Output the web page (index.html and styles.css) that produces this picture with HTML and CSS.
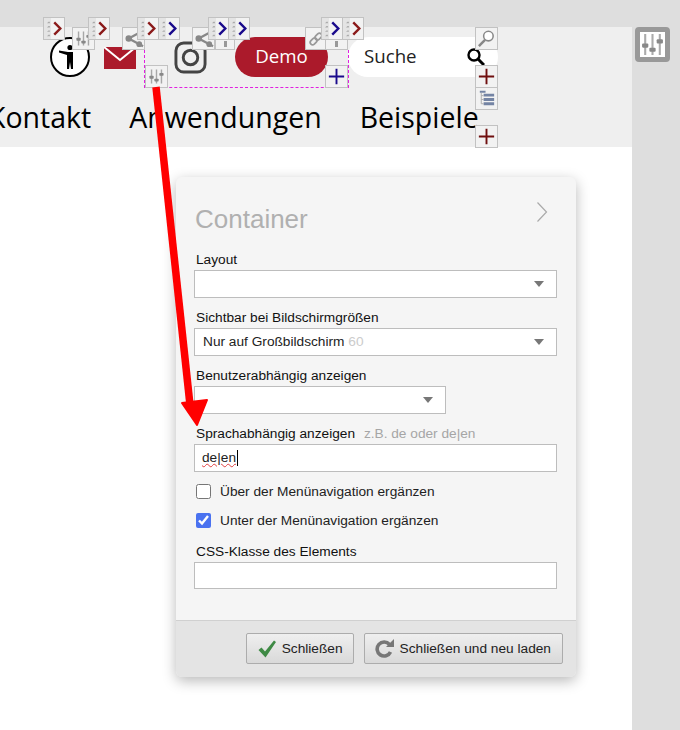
FILE: index.html
```html
<!DOCTYPE html>
<html lang="de">
<head>
<meta charset="utf-8">
<title>Container</title>
<link rel="stylesheet" href="styles.css">
</head>
<body>
<svg class="defs" width="0" height="0" aria-hidden="true">
  <symbol id="sliders" viewBox="0 0 24 24">
    <g fill="none" stroke="currentColor" stroke-width="2" stroke-opacity=".7">
      <path d="M5 2v20M12 2v20M19 2v20"/>
    </g>
    <g fill="currentColor">
      <rect x="2" y="11" width="6" height="4" rx="1"/>
      <rect x="9" y="15" width="6" height="4" rx="1"/>
      <rect x="16" y="7" width="6" height="4" rx="1"/>
    </g>
  </symbol>
  <symbol id="share" viewBox="0 0 22 22">
    <path d="M21 3 6 11l15 8" fill="none" stroke="currentColor" stroke-width="2.400"/>
    <circle cx="6" cy="11" r="3.400" fill="currentColor"/>
    <circle cx="17" cy="17" r="3" fill="currentColor"/>
  </symbol>
  <symbol id="plus" viewBox="0 0 22 22">
    <path d="M3 11h16M11 3v16" fill="none" stroke="currentColor" stroke-width="2"/>
  </symbol>
  <symbol id="grip" viewBox="0 0 7 22">
    <g fill="#aaa">
      <path d="M4.500 4h1.500v1.500H3zM4.500 8.500h1.500V10H3zM4.500 13h1.500v1.500H3zM4.500 17.500h1.500V19H3z"/>
    </g>
  </symbol>
  <symbol id="chev" viewBox="0 0 14 22">
    <path d="M3.500 4.500l6.500 6.500-6.500 6.500" fill="none" stroke="currentColor" stroke-width="2.600"/>
  </symbol>
</svg>

<div class="page">
  <div class="main">
    <header class="site-head">
      <div class="top-row">
        <svg class="ic-access" viewBox="0 0 40 40" aria-hidden="true">
          <circle cx="20" cy="20" r="19" fill="#fff" stroke="#000" stroke-width="2"/>
          <circle cx="20" cy="10.500" r="2.600" fill="#000"/>
          <path d="M9 13.500l9 1.500h5v9l0 8h-2l-1-7-1 7h-2v-14l-8-2.500z" fill="#000"/>
        </svg>
        <svg class="ic-mail" viewBox="0 0 32 22" aria-hidden="true">
          <rect width="32" height="22" fill="#ab1a2b"/>
          <path d="M0 0l16 13L32 0" fill="none" stroke="#fff" stroke-width="2"/>
        </svg>
        <svg class="ic-insta" viewBox="0 0 34 34" aria-hidden="true">
          <rect x="2" y="2" width="30" height="30" rx="8" fill="none" stroke="#444" stroke-width="3"/>
          <circle cx="17" cy="17" r="7.500" fill="none" stroke="#444" stroke-width="3"/>
        </svg>
        <a class="demo">Demo</a>
        <div class="search">
          <span class="search-text">Suche</span>
          <svg class="ic-search" viewBox="0 0 18 18" aria-hidden="true">
            <circle cx="7" cy="7" r="5.500" fill="none" stroke="#000" stroke-width="2.400"/>
            <path d="M11 11l6 6" stroke="#000" stroke-width="3"/>
          </svg>
        </div>
      </div>
      <nav class="nav">
        <span>Kontakt</span>
        <span>Anwendungen</span>
        <span>Beispiele</span>
      </nav>
    </header>
    <div class="content"></div>
  </div>
  <aside class="rail">
    <button class="settings" aria-label="Einstellungen">
      <svg viewBox="0 0 24 24"><use href="#sliders"/></svg>
    </button>
  </aside>
</div>

<div class="sel-frame"></div>

<div class="tool t-sl1"><svg><use href="#sliders"/></svg></div>
<div class="tool t-sh1"><svg><use href="#share"/></svg></div>
<div class="tool t-sh2"><svg><use href="#share"/></svg></div>
<div class="tool t-stem1"><i></i></div>
<div class="tool t-link">
  <svg viewBox="0 0 22 22"><g fill="none" stroke="#999" stroke-width="1.800"><rect x="4" y="11.500" width="8" height="5" rx="2.500" transform="rotate(-45 8 14)"/><rect x="9" y="6.500" width="8" height="5" rx="2.500" transform="rotate(-45 13 9)"/></g></svg>
</div>
<div class="tool t-stem2"><i></i></div>
<div class="tool t-sl2"><svg><use href="#sliders"/></svg></div>
<div class="tool t-plus1 blue"><svg><use href="#plus"/></svg></div>
<div class="tool t-search">
  <svg viewBox="0 0 22 22"><circle cx="13" cy="8.500" r="5" fill="#fff" stroke="#888" stroke-width="1.600"/><path d="M9.500 12.500 3 19" stroke="#888" stroke-width="2.600"/></svg>
</div>
<div class="tool t-plus2 red"><svg><use href="#plus"/></svg></div>
<div class="tool t-tree">
  <svg viewBox="0 0 22 22"><path d="M4 3h6v2H4zM8 6h11v3H8zM8 10.500h11v3H8zM8 15h11v3H8z" fill="#7484a4"/><path d="M5.500 5v11.500M5.500 8H8M5.500 12H8M5.500 16.500H8" stroke="#aaa" fill="none"/></svg>
</div>
<div class="tool t-plus3 red"><svg><use href="#plus"/></svg></div>

<div class="pair p1 red"><svg class="grip"><use href="#grip"/></svg><svg class="chev"><use href="#chev"/></svg></div>
<div class="pair p2 red"><svg class="grip"><use href="#grip"/></svg><svg class="chev"><use href="#chev"/></svg></div>
<div class="pair p3 red"><svg class="grip"><use href="#grip"/></svg><svg class="chev"><use href="#chev"/></svg></div>
<div class="pair p4 blue"><svg class="grip"><use href="#grip"/></svg><svg class="chev"><use href="#chev"/></svg></div>
<div class="pair p5 blue"><svg class="grip"><use href="#grip"/></svg><svg class="chev"><use href="#chev"/></svg></div>
<div class="pair p6 blue"><svg class="grip"><use href="#grip"/></svg><svg class="chev"><use href="#chev"/></svg></div>
<div class="pair p7 blue"><svg class="grip"><use href="#grip"/></svg><svg class="chev"><use href="#chev"/></svg></div>
<div class="pair p8 red"><svg class="grip"><use href="#grip"/></svg><svg class="chev"><use href="#chev"/></svg></div>

<section class="dialog">
  <div class="dialog-body">
    <div class="dialog-head">
      <h2>Container</h2>
      <svg class="dialog-chev" viewBox="0 0 12 22" aria-hidden="true"><path d="M1.500 1.500 10.500 11 1.500 20.500" fill="none" stroke="#aaa" stroke-width="1.200"/></svg>
    </div>
    <div class="field">
      <div class="label">Layout</div>
      <div class="box select"><span></span><i class="caret"></i></div>
    </div>
    <div class="field">
      <div class="label">Sichtbar bei Bildschirmgrößen</div>
      <div class="box select"><span>Nur auf Großbildschirm <em>60</em></span><i class="caret"></i></div>
    </div>
    <div class="field">
      <div class="label">Benutzerabhängig anzeigen</div>
      <div class="box select narrow"><span></span><i class="caret"></i></div>
    </div>
    <div class="field tight">
      <div class="label">Sprachabhängig anzeigen <small>z.B. de oder de|en</small></div>
      <div class="box"><span class="typed"><u>de|en</u><b class="cursor"></b></span></div>
    </div>
    <label class="check"><input type="checkbox"><span>Über der Menünavigation ergänzen</span></label>
    <label class="check"><input type="checkbox" checked><span>Unter der Menünavigation ergänzen</span></label>
    <div class="field last">
      <div class="label">CSS-Klasse des Elements</div>
      <div class="box short"></div>
    </div>
  </div>
  <footer class="dialog-foot">
    <button class="btn">
      <svg viewBox="0 0 20 20" aria-hidden="true"><path d="M1.500 11l3-2.500 3.500 4L17 1.500l2 1.500L8.500 18.500z" fill="#3f8a45"/></svg>
      Schließen
    </button>
    <button class="btn">
      <svg viewBox="0 0 20 20" aria-hidden="true"><path d="M15.500 13a7 7 0 1 1-1-7.500" fill="none" stroke="#777" stroke-width="3.600"/><path d="M11 8h8V0z" fill="#777"/></svg>
      Schließen und neu laden
    </button>
  </footer>
</section>

<svg class="arrow" viewBox="0 0 680 730" aria-hidden="true">
  <path d="M156 87 190 405" stroke="#f00" stroke-width="7.500" fill="none"/>
  <path d="M182 403 207 400 197 425z" fill="#f00" stroke="#f00" stroke-width="2" stroke-linejoin="round"/>
</svg>
</body>
</html>
```

FILE: styles.css
```css
* { box-sizing: border-box; }
html, body { margin: 0; padding: 0; height: 730px; overflow: hidden; }
body { position: relative; font-family: "Liberation Sans", Arial, sans-serif; color: #000; background: #dedede; }
.defs { position: absolute; }

.page { display: grid; grid-template-columns: 632px 48px; height: 730px; }
.main { padding-top: 27px; display: flex; flex-direction: column; }
.site-head { height: 120px; background: #efefef; font-family: "Open Sans", sans-serif; padding-top: 10px; }
.content { flex: 1; background: #fff; }
.rail { padding: 27px 0 0 3px; }

.settings { display: block; width: 35px; height: 35px; padding: 0; border: 5px solid #999; border-radius: 4px; background: #fff; color: #888; }
.settings svg { display: block; width: 25px; height: 25px; }

.top-row { display: flex; align-items: center; height: 40px; padding-left: 50px; }
.ic-access { width: 40px; height: 40px; flex: none; }
.ic-mail { width: 32px; height: 22px; flex: none; margin: 1px 0 0 14px; }
.ic-insta { width: 33px; height: 33px; flex: none; margin: 0 0 0 38px; }
.demo { width: 93px; height: 40px; margin-left: 28px; flex: none; border-radius: 20px; background: #ab1a2b; color: #fff; font-size: 18.7px; line-height: 38px; text-align: center; }
.search { width: 150px; height: 40px; margin-left: 20px; flex: none; display: flex; align-items: center; justify-content: space-between; padding: 0 13px 0 16px; border-radius: 20px; background: #fff; font-size: 18.7px; color: #222; }
.search-text { line-height: 38px; height: 40px; }
.ic-search { width: 18px; height: 18px; }

.nav { display: flex; gap: 38px; margin: 18px 0 0 -12px; font-size: 28.5px; line-height: 44px; white-space: nowrap; color: #000; }

.sel-frame { position: absolute; left: 144px; top: 50px; width: 205px; height: 38px; border: 1px dashed #e020e0; border-top: 0; }

.tool { position: absolute; width: 23px; height: 23px; border: 1px solid #c2c2c2; background: #f2f2f2; color: #888; }
.tool svg { display: block; width: 21px; height: 21px; }
.tool.blue { color: #1a0a8c; }
.tool.red { color: #6f0f0f; }
.tool i { display: block; width: 3px; height: 6px; margin: 1px auto 0; background: #999; }
.t-sl1 { left: 72px; top: 27px; }
.t-sl1 svg, .t-sl2 svg { width: 17px; height: 17px; margin: 2px; }
.t-sh1 { left: 122px; top: 27px; }
.t-sh2 { left: 192px; top: 27px; }
.t-stem1 { left: 215px; top: 39px; height: 11px; width: 20px; }
.t-link { left: 305px; top: 27px; width: 21px; }
.t-stem2 { left: 325px; top: 39px; height: 11px; }
.t-sl2 { left: 145px; top: 65px; }
.t-plus1 { left: 325px; top: 65px; }
.t-search { left: 475px; top: 27px; }
.t-plus2 { left: 475px; top: 65px; }
.t-tree { left: 475px; top: 87px; }
.t-plus3 { left: 475px; top: 125px; }

.pair { position: absolute; top: 17px; width: 22px; height: 23px; display: flex; border: 1px solid #c2c2c2; background: #f2f2f2; }
.pair .grip { width: 7px; height: 21px; flex: none; background: #e4e4e4; }
.pair .chev { width: 13px; height: 21px; flex: none; }
.pair.red { color: #8b1a1a; }
.pair.blue { color: #1a0a8c; }
.p1 { left: 43px; }
.p2 { left: 88px; }
.p3 { left: 137px; }
.p4 { left: 158px; }
.p5 { left: 208px; }
.p6 { left: 228px; }
.p7 { left: 321px; }
.p8 { left: 342px; }

.dialog { position: absolute; left: 176px; top: 177px; width: 400px; height: 500px; display: flex; flex-direction: column; border-radius: 6px; background: #f5f5f5; box-shadow: 0 4px 14px rgba(0, 0, 0, .28); overflow: hidden; font-size: 13.7px; }
.dialog-body { flex: 1; padding: 0 19px 0 18px; }
.dialog-head { height: 75px; display: flex; justify-content: space-between; padding: 24px 9px 0 1px; }
.dialog-head h2 { margin: 3px 0 0; font-size: 26px; line-height: 30px; font-weight: 400; color: #b0b0b0; }
.dialog-chev { width: 12px; height: 22px; }
.field { height: 58px; }
.field.tight { height: 51px; }
.field.last { margin-top: 9px; }
.label { height: 18px; padding-left: 2px; line-height: 15px; color: #111; }
.label small { margin-left: 5px; font-size: 13.7px; color: #a6a6a6; }
.box { display: flex; align-items: center; justify-content: space-between; height: 28px; padding: 0 12px 0 8px; border: 1px solid #bdbdbd; background: #fff; color: #222; line-height: 26px; }
.box.narrow { width: 252px; }
.box.short { height: 27px; }
.box em { font-style: normal; color: #ccc; }
.caret { width: 0; height: 0; border: 5px solid transparent; border-top: 6px solid #777; border-bottom: 0; }
.typed { display: flex; align-items: center; margin-left: -1px; }
.typed u { text-decoration: underline wavy #e04040 1px; text-underline-offset: 1px; }
.cursor { display: block; width: 1px; height: 16px; margin-left: 1px; background: #000; }

.check { display: flex; align-items: center; height: 29px; padding-left: 2px; color: #222; }
.check input { width: 15px; height: 15px; margin: 0 9px 0 0; accent-color: #4a72f0; }

.dialog-foot { height: 57px; flex: none; display: flex; justify-content: flex-end; gap: 10px; padding: 12px 13px 0 0; border-top: 1px solid #d0d0d0; background: #e4e4e4; }
.btn { display: flex; align-items: center; gap: 5px; height: 31px; padding: 0 10px; border: 1px solid #acacac; border-radius: 2px; background: linear-gradient(#efefef, #d9d9d9); font: 13.7px "Liberation Sans", Arial, sans-serif; color: #222; white-space: nowrap; }
.btn + .btn { padding-right: 11px; }
.btn svg { width: 20px; height: 20px; flex: none; }

.arrow { position: absolute; left: 0; top: 0; width: 680px; height: 730px; pointer-events: none; }
```
